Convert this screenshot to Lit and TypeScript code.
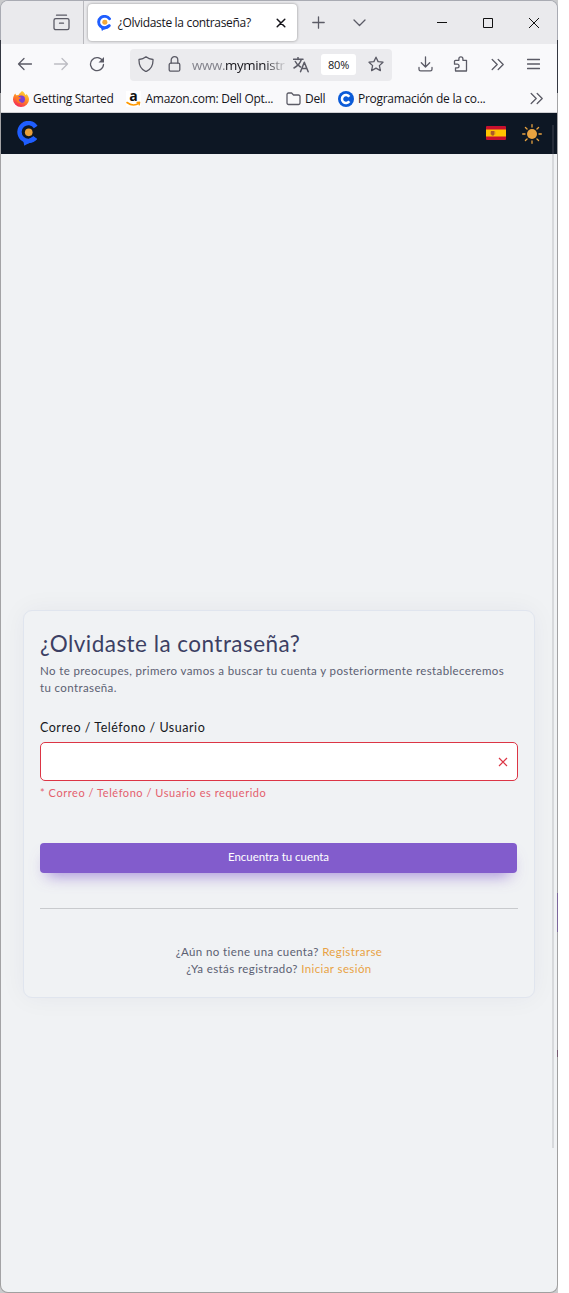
import { LitElement, html, css, svg } from "lit";
import { customElement } from "lit/decorators.js";

const icon = (w: number, h: number, body: unknown, cls = "") =>
  html`<svg class="ico ${cls}" width=${w} height=${h} viewBox="0 0 ${w} ${h}" aria-hidden="true">${body}</svg>`;

const brand = (w: number, h: number, dot: string) => html`
  <svg class="ico" width=${w} height=${h} viewBox="0 0 22 26" preserveAspectRatio="none" aria-hidden="true">
    <path d="M19.600 6.200A9.300 9.300 0 1 0 19.200 17.200" fill="none" stroke="#1f5eff" stroke-width="4.600"/>
    <path d="M6 18.500L7.700 25.800C10.500 23.400 17 22.500 21 18.800L17 15.800L12 19Z" fill="#1f5eff"/>
    <circle cx="12.300" cy="11.800" r="4" fill=${dot}/>
  </svg>`;

const shapes = {
  archive: svg`<path d="M3.500 1.200h10M2.600 4.700h11.800a1.600 1.600 0 0 1 1.600 1.600v7.600a1.800 1.800 0 0 1-1.800 1.800H2.800A1.800 1.800 0 0 1 1 13.900V6.300A1.600 1.600 0 0 1 2.600 4.700ZM6.500 9.200h4"/>`,
  back: svg`<path d="M14.500 8H1.500M7 2.500L1.500 8L7 13.500"/>`,
  forward: svg`<path d="M1.500 8h13M9 2.500L14.500 8L9 13.500"/>`,
  reload: svg`<path d="M13.800 5.200A6.500 6.500 0 1 0 14.500 8.500"/><path d="M15 1v5.500H9.500Z" fill="currentColor" stroke="none"/>`,
  shield: svg`<path d="M8 .8C6 2.500 3.500 3.300 1 3.500C.8 9 3 13.500 8 15.600C13 13.500 15.200 9 15 3.500C12.500 3.300 10 2.500 8 .8Z"/>`,
  lock: svg`<rect x="1.200" y="7.200" width="10.600" height="8" rx="1.500"/><path d="M3.200 7V4A3.300 3.300 0 0 1 9.800 4V7"/>`,
  star: svg`<path d="M8 1.200L10.100 5.600L15 6.200L11.400 9.600L12.400 14.600L8 12.100L3.600 14.600L4.600 9.600L1 6.200L5.900 5.600Z"/>`,
  download: svg`<path d="M7.500 .8v10M3.300 6.800L7.500 11L11.700 6.800M1 11.500v1.700a1.600 1.600 0 0 0 1.600 1.600h9.800a1.600 1.600 0 0 0 1.600-1.600v-1.700"/>`,
  puzzle: svg`<path d="M2.500 4.300H5.900V2.800a2 2 0 0 1 4 0v1.500h3.600V15H2.500V11.900H4.200a1.600 1.600 0 0 0 0-3.700H1.500V5.300a1 1 0 0 1 1-1Z"/>`,
  more: svg`<path d="M1.200 1.500L6.200 6.500L1.200 11.500M7.200 1.500L12.200 6.500L7.200 11.500"/>`,
  menu: svg`<path d="M.5 1.500h12M.5 6h12M.5 10.500h12"/>`,
  folder: svg`<path d="M1 11V2.500A1.500 1.500 0 0 1 2.500 1H5.600L7.500 3H12.500A1.500 1.500 0 0 1 14 4.500V11A1.500 1.500 0 0 1 12.500 12.500H2.500A1.500 1.500 0 0 1 1 11Z"/>`,
};

@customElement("browser-chrome")
class BrowserChrome extends LitElement {
  static styles = css`
    :host { display: block; font-family: "Open Sans", "Noto Sans", sans-serif; font-size: 12px; color: #15141a; }
    .ico { display: block; flex: none; fill: none; stroke: currentColor; stroke-width: 1.3; stroke-linecap: round; stroke-linejoin: round; color: #5b5b66; }
    .plain { stroke: none; overflow: visible; }
    .sharp { stroke-width: 1; color: #111; stroke-linecap: butt; stroke-linejoin: miter; }
    .faint { color: #bdbdc3; }
    .tabs { display: flex; height: 43px; background: #eaeaed; }
    .pinned { width: 82px; border-right: 1px solid #b9b9be; display: flex; box-sizing: content-box; }
    .pinned svg { margin: 13px 0 0 52px; }
    .tab { display: flex; align-items: center; box-sizing: border-box; width: 210px; height: 37px; margin: 3px 3px 0 4px; padding: 0 11px 0 9px; background: #fff; border-radius: 4px; box-shadow: 0 0 3px rgba(0,0,0,.4); }
    .tab .ico { stroke: none; }
    .title { margin-left: 7px; width: 158px; letter-spacing: -.32px; white-space: nowrap; }
    .tab .ico.x { stroke: currentColor; color: #15141a; stroke-width: 1.5; }
    .slot { display: flex; align-items: center; justify-content: center; width: 36px; flex: none; }
    .plus { width: 37px; }
    .drop { width: 44px; }
    .win { width: 46px; }
    .first { margin-left: 38px; }
    .tools { display: flex; align-items: center; height: 41px; padding-left: 6px; background: #f9f9fb; }
    .tools .slot { padding-bottom: 1px; }
    .url { display: flex; align-items: center; width: 262px; height: 32px; margin: 0 15px; background: #ebebee; border-radius: 4px; flex: none; }
    .shield { width: 32px; }
    .lock { width: 24px; }
    .addr { flex: none; width: 93px; margin: 1px 8px 0 6px; white-space: nowrap; font-size: 13.3px; letter-spacing: -.34px; color: #83838c; mask-image: linear-gradient(90deg, #000 78%, rgba(0,0,0,.1)); }
    .addr b { font-weight: 400; color: #15141a; }
    .zoom { flex: none; width: 35px; height: 21px; margin-left: 12px; background: #fff; border-radius: 3px; text-align: center; font-size: 11px; line-height: 22px; letter-spacing: -.2px; }
    .url .star { width: 30px; margin-left: 5px; }
    .marks { display: flex; align-items: center; height: 27px; padding-left: 12px; background: #f9f9fb; border-bottom: 1px solid #cfcfd3; white-space: nowrap; }
    .mark { display: flex; align-items: center; gap: 4px; flex: none; }
    .m1 { width: 113px; letter-spacing: -.28px; }
    .m2 { width: 160px; gap: 4.5px; letter-spacing: -.28px; }
    .m3 { width: 52px; letter-spacing: -.3px; }
    .m4 { width: 180px; letter-spacing: -.28px; }
    .a { font: bold 14px/11px "Open Sans", sans-serif; fill: #111; stroke: none; }
  `;
  render() {
    return html`
      <div class="tabs">
        <div class="pinned">${icon(17, 17, shapes.archive)}</div>
        <div class="tab">${brand(14, 16, "#f5a93a")}<span class="title">¿Olvidaste la contraseña?</span>
          ${icon(10, 10, svg`<path d="M1.200 1.200L8.800 8.800M8.800 1.200L1.200 8.800"/>`, "x")}</div>
        <div class="slot plus">${icon(13, 13, svg`<path d="M6.500 .8v11.400M.8 6.500h11.400"/>`)}</div>
        <div class="slot drop">${icon(13, 8, svg`<path d="M1 1L6.500 6.500L12 1"/>`)}</div>
        <div class="slot win first">${icon(10, 10, svg`<path d="M0 4.500h10"/>`, "sharp")}</div>
        <div class="slot win">${icon(10, 10, svg`<path d="M.5 .5h9v9h-9Z"/>`, "sharp")}</div>
        <div class="slot win">${icon(10, 10, svg`<path d="M0 0L10 10M10 0L0 10"/>`, "sharp")}</div>
      </div>
      <div class="tools">
        <div class="slot">${icon(16, 16, shapes.back)}</div>
        <div class="slot">${icon(16, 16, shapes.forward, "faint")}</div>
        <div class="slot">${icon(16, 16, shapes.reload)}</div>
        <div class="url">
          <div class="slot shield">${icon(16, 16, shapes.shield)}</div>
          <div class="slot lock">${icon(13, 16, shapes.lock)}</div>
          <div class="addr">www.<b>myministr</b></div>
          ${icon(16, 16, svg`<path d="M.5 2.300h9.500M5 .5v2M8.300 2.500C7.300 6 4.500 9 1 11M2.300 4.500C3.500 7 5.300 8.800 7.500 10M7.500 14.700L11.300 5.300L15.200 14.700M9 11.500h4.600" stroke-width="1.500"/>`)}
          <div class="zoom">80%</div>
          <div class="slot star">${icon(16, 16, shapes.star)}</div>
        </div>
        <div class="slot">${icon(15, 16, shapes.download)}</div>
        <div class="slot">${icon(16, 16, shapes.puzzle)}</div>
        <div class="slot">${icon(13, 13, shapes.more)}</div>
        <div class="slot">${icon(13, 12, shapes.menu)}</div>
      </div>
      <div class="marks">
        <div class="mark m1">${icon(16, 16, svg`
          <defs><linearGradient id="ff" x1=".8" y1="0" x2=".3" y2="1"><stop offset="0" stop-color="#ffe03a"/><stop offset=".5" stop-color="#ff8a24"/><stop offset="1" stop-color="#f5245c"/></linearGradient></defs>
          <path d="M9 0C11.500 1.500 12 3 12.300 4C13 3.800 13.500 3.500 13.500 3C15.500 5 16 7 16 8.500A8 7.500 0 0 1 0 8.500C0 6 1 4 2.200 2.500L3.200 4.300L5.500 4C6.500 2.200 7.500 1.500 9 0Z" fill="url(#ff)"/>
          <circle cx="8.300" cy="8.300" r="3.700" fill="#7b3fd6"/><path d="M3.500 6.500C5.500 5.600 7 6 8.200 7L6 8.300C5.500 10 7 11.500 9 11.300C6 13.500 3 11 3.500 6.500Z" fill="#ff7b27"/>`, "plain")}<span>Getting Started</span></div>
        <div class="mark m2">${icon(15, 16, svg`<rect width="15" height="16" fill="#fff"/><text class="a" x="3.200" y="9.500">a</text><path d="M1 11.500C5 14.500 9.500 14.500 13 12.300" stroke="#f90" stroke-width="1.600"/><path d="M11 11.300l2.700-.1l-.5 2.600" stroke="#f90"/>`, "plain")}<span>Amazon.com: Dell Opt...</span></div>
        <div class="mark m3">${icon(15, 14, shapes.folder)}<span>Dell</span></div>
        <div class="mark m4">${icon(16, 16, svg`<circle cx="8" cy="8" r="8" fill="#0b5bd8"/><path d="M11.300 5.800A4 4 0 1 0 11.300 10.200" stroke="#fff" stroke-width="2.500" stroke-linecap="butt"/>`, "plain")}<span>Programación de la co...</span></div>
        <div class="slot">${icon(13, 13, shapes.more)}</div>
      </div>`;
  }
}

@customElement("account-card")
class AccountCard extends LitElement {
  static styles = css`
    :host { display: block; box-sizing: border-box; width: 512px; height: 388px; padding: 17px 16px 0; border: 1px solid #e0e5ee; border-radius: 9px; background: #f0f2f4; box-shadow: 0 0 26px rgba(40,40,70,.05); font-family: Lato, "Open Sans", sans-serif; color: #5b6072; }
    h1 { margin: 0 0 3px; font-size: 22.5px; line-height: 31px; font-weight: 400; letter-spacing: .46px; color: #3c3f63; }
    p { margin: 0; font-size: 11.5px; line-height: 17px; letter-spacing: .375px; white-space: nowrap; }
    label { display: block; margin: 22px 0 4px; font-size: 12.5px; line-height: 20px; letter-spacing: .53px; color: #15171c; }
    .field { display: flex; align-items: center; justify-content: flex-end; box-sizing: border-box; width: 478px; height: 39px; padding-right: 9px; border: 1px solid #dc3545; border-radius: 5px; background: #fff; }
    .err { margin-top: 4px; font-size: 11px; line-height: 16px; letter-spacing: .55px; color: #e4606d; }
    button { display: block; width: 477px; height: 30px; margin: 42px 0 35px; padding: 0 0 2px; border: 0; border-radius: 4px; background: #825ccc; color: #fff; font: 11.5px/28px Lato, sans-serif; letter-spacing: -.04px; box-shadow: 0 9px 16px -7px rgba(130,92,204,.75); }
    .rule { width: 478px; height: 1px; background: #c8cacd; margin-bottom: 34px; }
    .foot { text-align: center; letter-spacing: .4px; width: 478px; }
    .link { color: #e8a245; }
  `;
  render() {
    return html`
      <h1>¿Olvidaste la contraseña?</h1>
      <p>No te preocupes, primero vamos a buscar tu cuenta y posteriormente restableceremos<br>tu contraseña.</p>
      <label>Correo / Teléfono / Usuario</label>
      <div class="field"><svg width="10" height="10" viewBox="0 0 10 10"><path d="M1 1L9 9M9 1L1 9" stroke="#dc3545" stroke-width="1.200"/></svg></div>
      <div class="err">* Correo / Teléfono / Usuario es requerido</div>
      <button>Encuentra tu cuenta</button>
      <div class="rule"></div>
      <p class="foot">¿Aún no tiene una cuenta? <span class="link">Registrarse</span><br>¿Ya estás registrado? <span class="link">Iniciar sesión</span></p>`;
  }
}

@customElement("app-root")
class AppRoot extends LitElement {
  static styles = css`
    :host { display: block; width: 569px; height: 1293px; background: #fff; overflow: hidden; }
    .desk { width: 558px; height: 1293px; background: #c9cacc; }
    .frame { position: relative; box-sizing: border-box; width: 558px; height: 1293px; padding: 1px; border-radius: 8px; background: linear-gradient(#a9abb3 0 40px, #343741 40px 93px, #a3a3a5 93px 893px, #7c679c 893px 932px, #a3a3a5 932px 1050px, #755a70 1050px 1057px, #a0a0a0 1057px); }
    .frame::before { content: ""; position: absolute; left: 0; top: 93px; width: 1px; height: 1190px; background: #a3a3a5; }
    .inner { display: flex; flex-direction: column; height: 1291px; border-radius: 7px; overflow: hidden; background: #f0f2f4; }
    .nav { display: flex; align-items: center; height: 41px; flex: none; box-sizing: border-box; padding: 0 15px; background: #0d1724; }
    .logo { flex: 1; padding-left: 1px; }
    .nav svg { display: block; }
    .flag { margin: 0 16px 1px 0; }
    .body { padding: 456px 0 0 22px; }
    .bar { position: absolute; left: 552px; top: 125px; width: 2px; height: 1023px; background: rgba(128,128,136,.22); }
  `;
  render() {
    const rays = [0, 45, 90, 135, 180, 225, 270, 315];
    return html`<div class="desk"><div class="frame"><div class="inner">
      <browser-chrome></browser-chrome>
      <div class="nav">
        <div class="logo">${brand(21, 25, "#e9a03b")}</div>
        <svg class="flag" width="20" height="14" viewBox="0 0 20 14"><rect width="20" height="14" rx="1" fill="#c8102e"/><rect y="3.500" width="20" height="7" fill="#ffc400"/><path d="M5 5h3.500v3A1.700 1.700 0 0 1 5 8Z" fill="#ad5a28"/><path d="M4.500 5.500v3M9 5.500v3" stroke="#c9843a" stroke-width=".6"/></svg>
        <svg width="20" height="20" viewBox="0 0 20 20"><circle cx="10" cy="10" r="5" fill="#e9a340"/>${rays.map(r => svg`<path d="M10 .7v2.300" stroke="#e9a340" stroke-width="1.300" stroke-linecap="round" transform="rotate(${r} 10 10)"/>`)}</svg>
      </div>
      <div class="body"><account-card></account-card></div>
    </div><div class="bar"></div></div></div>`;
  }
}
